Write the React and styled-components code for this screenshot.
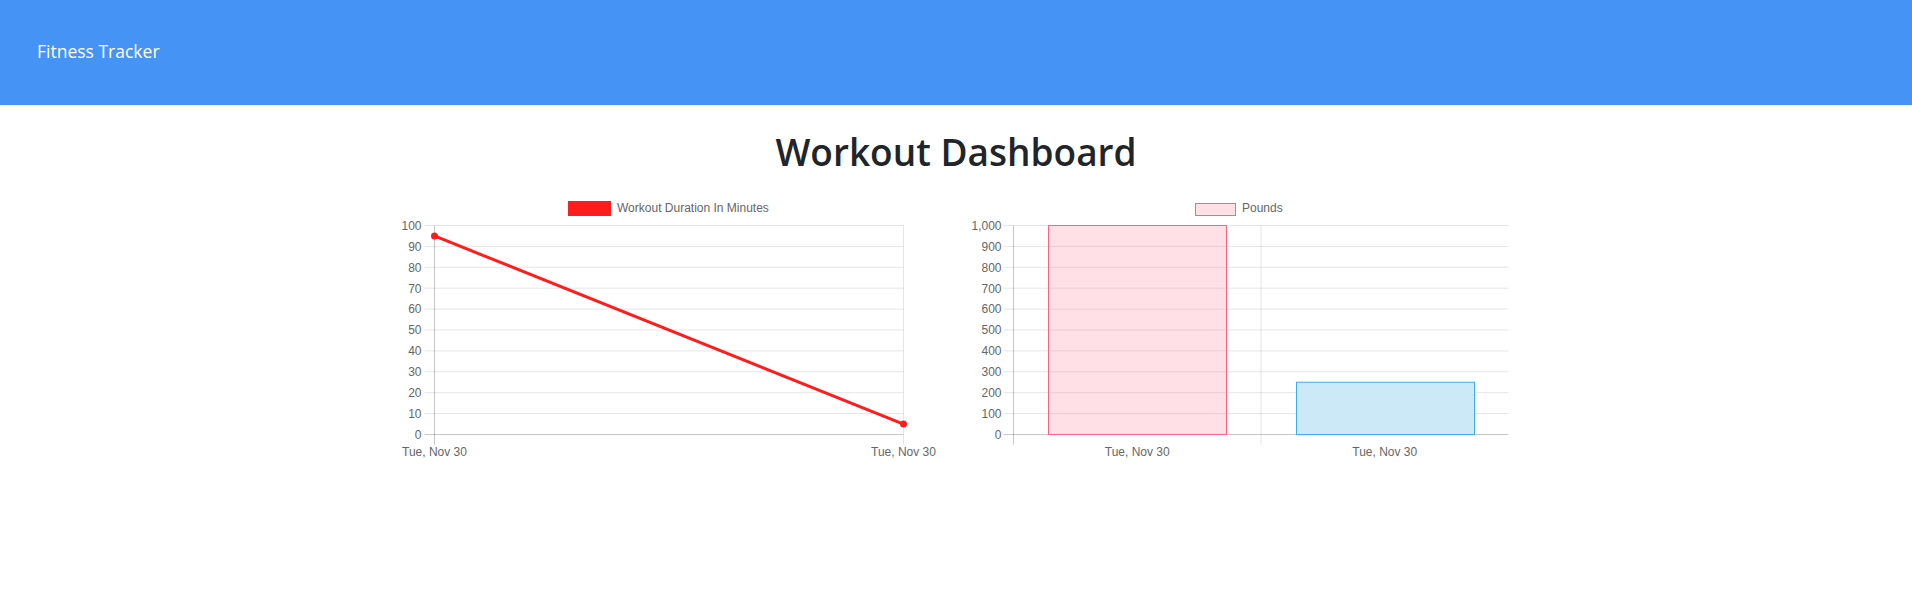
import React from "react";
import styled, { createGlobalStyle } from "styled-components";

const GlobalStyle = createGlobalStyle`
  html, body { margin: 0; padding: 0; background: #fff; }
  body { font-family: "Open Sans", "Noto Sans", sans-serif; color: #212529; }
`;

const Navbar = styled.header`
  height: 105px;
  background: #4593f5;
  display: flex;
  align-items: center;
  padding: 0 0 2px 37px;
  box-sizing: border-box;
`;

const Brand = styled.span`
  color: #fff;
  font-size: 17.5px;
  font-family: "Open Sans", sans-serif;
  line-height: 1;
`;

const Main = styled.main`
  display: flex;
  flex-direction: column;
  align-items: center;
`;

const Title = styled.h1`
  margin: 23px 0 0;
  font-size: 37px;
  font-weight: 600;
  line-height: 47px;
  color: #212529;
  font-family: "Open Sans", sans-serif;
`;

const ChartsRow = styled.section`
  display: flex;
  gap: 24px;
  margin-top: 17px;
`;

const ChartSvg = styled.svg`
  display: block;
  width: 546px;
  height: 273px;
  overflow: visible;
  font-family: "Liberation Sans", Arial, sans-serif;
  font-size: 12px;
`;

const GRID = "rgba(0,0,0,0.1)";
const AXIS = "rgba(0,0,0,0.22)";
const TXT = "#666";
const RED = "#ff1c1c";

function LineChart() {
  const L = 36.5, R = 505.5, T = 33.5, B = 242.5;
  const ticks = [100, 90, 80, 70, 60, 50, 40, 30, 20, 10, 0];
  const yOf = (v) => B - ((B - T) * v) / 100;
  const data = [95, 5];
  const xs = [L, R];
  return (
    <ChartSvg viewBox="0 0 546 273">
      <rect x="171.5" y="10.5" width="40" height="12" fill={RED} stroke={RED} strokeWidth="3" />
      <text x="219" y="20" fill={TXT}>Workout Duration In Minutes</text>
      {ticks.map((t) => (
        <g key={t}>
          <line x1={L - 10} x2={R} y1={yOf(t)} y2={yOf(t)} stroke={t === 0 ? AXIS : GRID} strokeWidth="1" />
          <text x={L - 13} y={yOf(t) + 4.3} textAnchor="end" fill={TXT}>{t}</text>
        </g>
      ))}
      <line x1={L} x2={L} y1={T} y2={B + 10} stroke={AXIS} />
      <line x1={R} x2={R} y1={T} y2={B + 10} stroke={GRID} />
      {xs.map((x, i) => (
        <text key={i} x={x} y="264" textAnchor="middle" fill={TXT}>Tue, Nov 30</text>
      ))}
      <polyline
        points={xs.map((x, i) => `${x},${yOf(data[i])}`).join(" ")}
        fill="none"
        stroke={RED}
        strokeWidth="3"
      />
      {xs.map((x, i) => (
        <circle key={i} cx={x} cy={yOf(data[i])} r="3.5" fill={RED} />
      ))}
    </ChartSvg>
  );
}

function BarChart() {
  const L = 45.5, R = 540.5, T = 33.5, B = 242.5;
  const ticks = [1000, 900, 800, 700, 600, 500, 400, 300, 200, 100, 0];
  const yOf = (v) => B - ((B - T) * v) / 1000;
  const cat = (R - L) / 2;
  const bars = [
    { v: 1000, fill: "rgba(255,99,132,0.2)", stroke: "rgba(255,99,132,1)" },
    { v: 250, fill: "#cbe9f6", stroke: "#3aaee8" },
  ];
  const bw = cat * 0.72;
  return (
    <ChartSvg viewBox="0 0 546 273">
      <rect x="227.5" y="11.5" width="40" height="12" fill="rgba(255,99,132,0.2)" stroke="rgba(255,99,132,1)" strokeWidth="1" />
      <text x="274" y="20" fill={TXT}>Pounds</text>
      {ticks.map((t) => (
        <g key={t}>
          <line x1={L - 10} x2={R} y1={yOf(t)} y2={yOf(t)} stroke={t === 0 ? AXIS : GRID} />
          <text x={L - 12} y={yOf(t) + 4.3} textAnchor="end" fill={TXT}>
            {t.toLocaleString("en-US")}
          </text>
        </g>
      ))}
      <line x1={L} x2={L} y1={T} y2={B + 10} stroke={AXIS} />
      <line x1={L + cat} x2={L + cat} y1={T} y2={B + 10} stroke={GRID} />
      {bars.map((b, i) => {
        const cx = L + cat * (i + 0.5);
        const x = Math.round(cx - bw / 2) + 0.5;
        const y = yOf(b.v);
        return (
          <g key={i}>
            <rect x={x} y={y} width={Math.round(bw)} height={B - y} fill={b.fill} stroke={b.stroke} strokeWidth="1" />
            <text x={cx} y="264" textAnchor="middle" fill={TXT}>Tue, Nov 30</text>
          </g>
        );
      })}
    </ChartSvg>
  );
}

export default function App() {
  return (
    <>
      <GlobalStyle />
      <Navbar>
        <Brand>Fitness Tracker</Brand>
      </Navbar>
      <Main>
        <Title>Workout Dashboard</Title>
        <ChartsRow>
          <LineChart />
          <BarChart />
        </ChartsRow>
      </Main>
    </>
  );
}
